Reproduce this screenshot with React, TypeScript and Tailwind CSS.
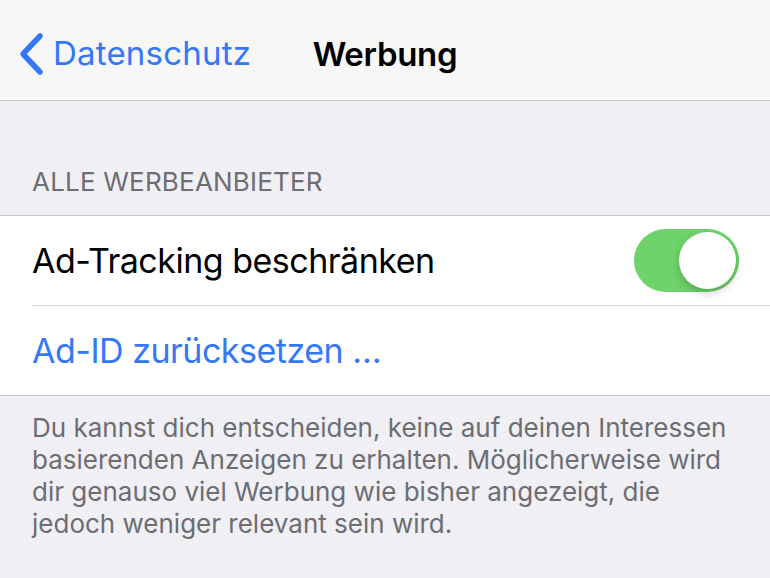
export default function App() {
  return (
    <div className="h-[578px] w-[770px] overflow-hidden bg-[#efeff4]" style={{ fontFamily: 'Inter, "Noto Sans", sans-serif' }}>
      {/* Nav bar */}
      <div className="relative flex h-[101px] items-center border-b border-[#c8c7cc] bg-[#f7f7f8]">
        <div className="flex items-center pl-[18px] pt-[8px] text-[#3478f6]">
          <svg width="26" height="44" viewBox="0 0 26 44" fill="none">
            <path d="M22 4 L5 22 L22 40" stroke="#3478f6" strokeWidth="5.5" strokeLinecap="round" strokeLinejoin="round" />
          </svg>
          <span className="ml-[9px] text-[33px] tracking-[0.2px]">Datenschutz</span>
        </div>
        <span className="absolute left-1/2 top-[30px] -translate-x-1/2 text-[33px] font-semibold tracking-[-0.3px] text-black">Werbung</span>
      </div>

      {/* Section header */}
      <div className="flex h-[114px] items-end px-[32px] pb-[14px]">
        <span className="text-[26px] uppercase tracking-[0.2px] text-[#6d6d72]">Alle Werbeanbieter</span>
      </div>

      {/* Group */}
      <div className="border-y border-[#c8c7cc] bg-white">
        <div className="flex h-[89px] items-center justify-between pl-[32px] pr-[31px]">
          <span className="text-[34px] tracking-[-0.5px] text-black">Ad-Tracking beschränken</span>
          <div className="relative h-[63px] w-[105px] rounded-full bg-[#6dd36a]">
            <div className="absolute right-[3px] top-[3px] h-[57px] w-[57px] rounded-full bg-white shadow-[0_4px_8px_rgba(0,0,0,0.2)]" />
          </div>
        </div>
        <div className="ml-[32px] border-t border-[#dcdce0]" />
        <div className="flex h-[89px] items-center pl-[32px]">
          <span className="text-[34px] tracking-[-0.5px] text-[#3478f6]">Ad-ID zurücksetzen …</span>
        </div>
      </div>

      {/* Footer */}
      <div className="px-[32px] pt-[16px] text-[26px] leading-[32px] text-[#6d6d72]">
        Du kannst dich entscheiden, keine auf deinen Interessen basierenden Anzeigen zu erhalten. Möglicherweise wird dir genauso viel Werbung wie bisher angezeigt, die jedoch weniger relevant sein wird.
      </div>
    </div>
  )
}
